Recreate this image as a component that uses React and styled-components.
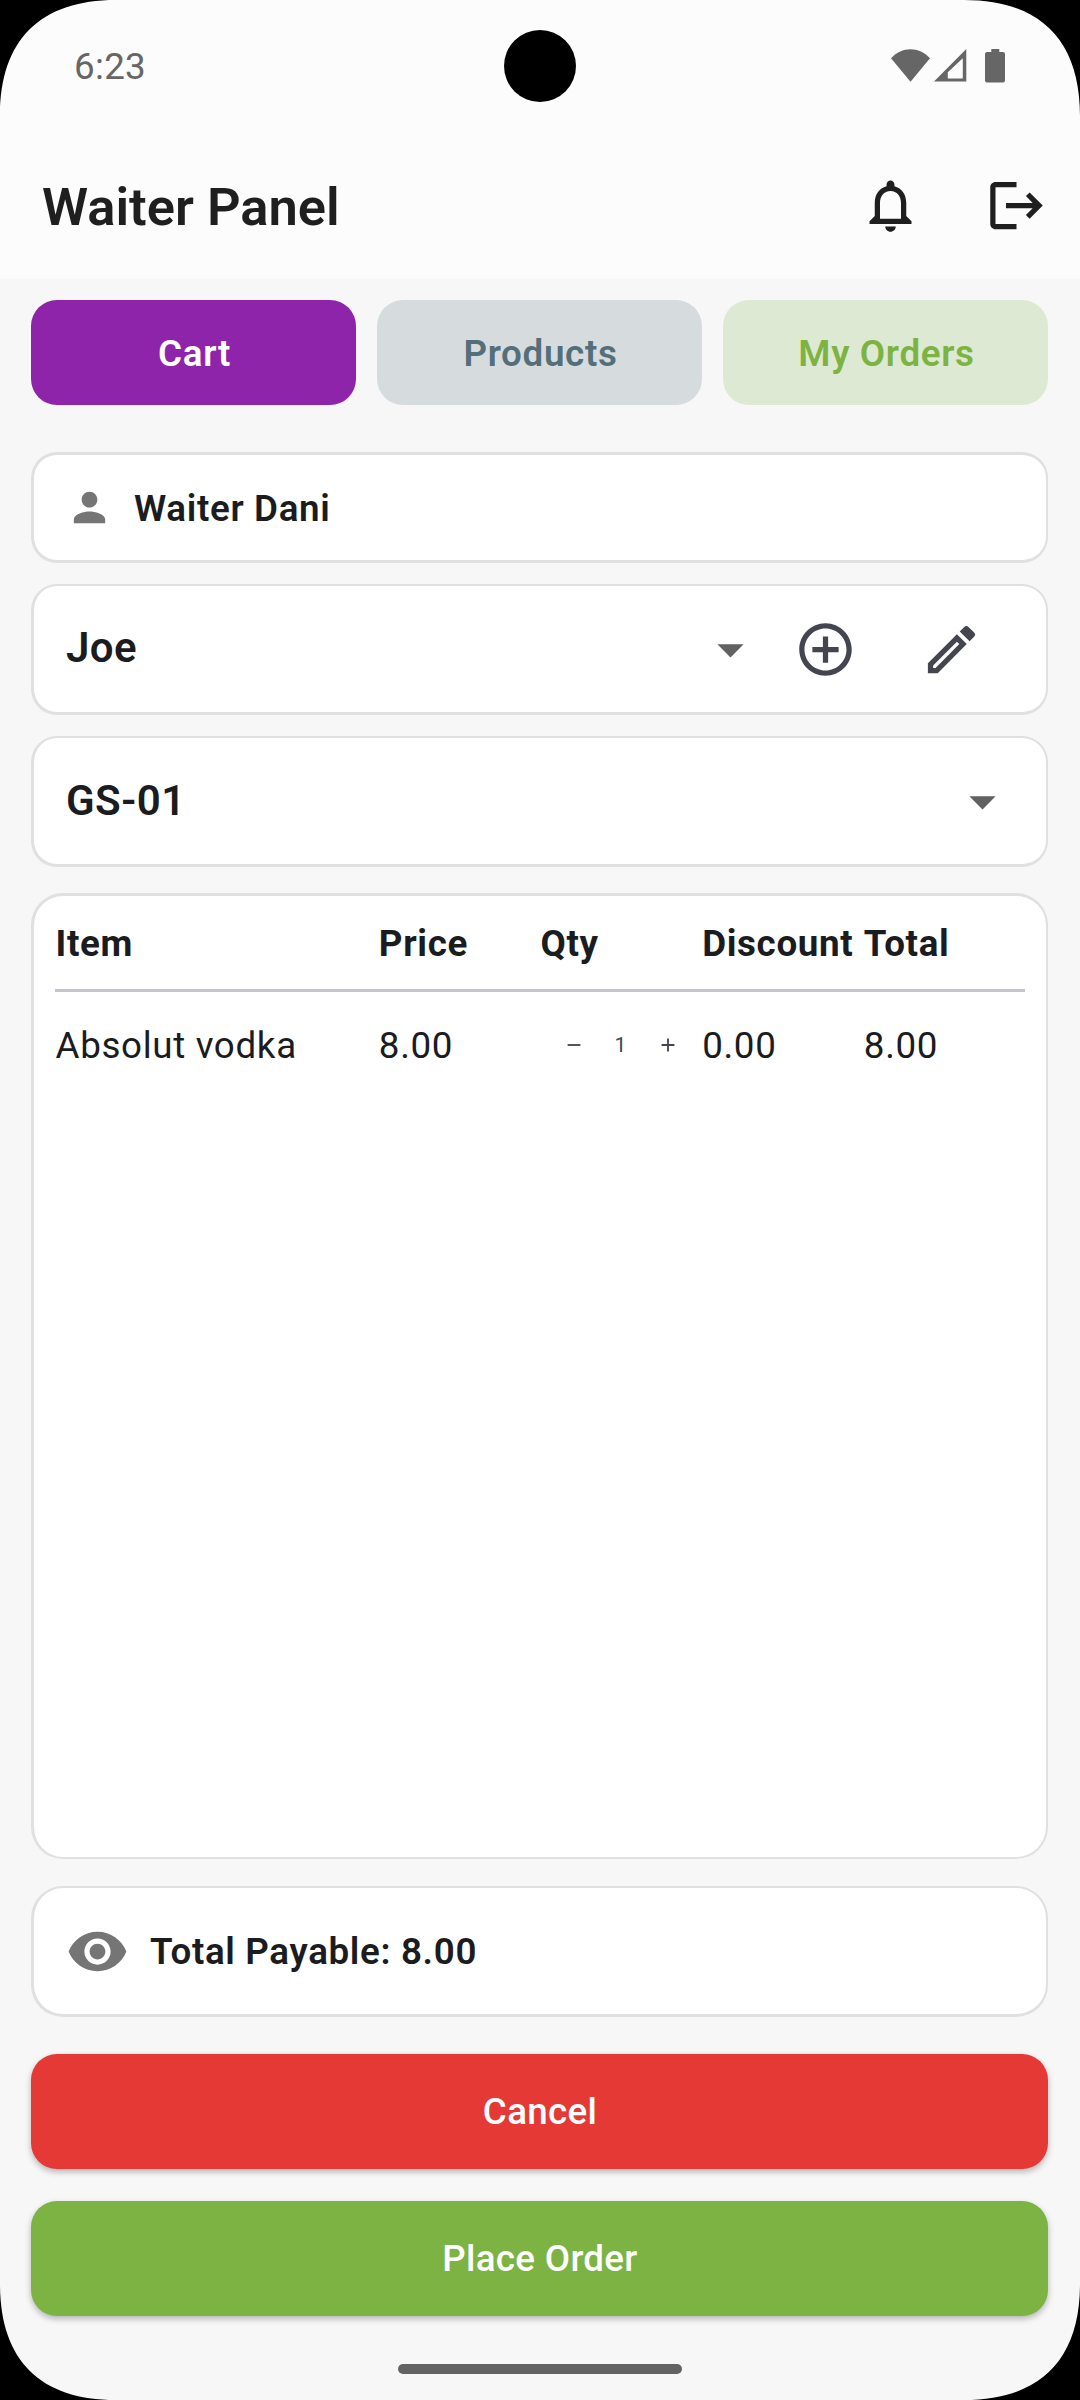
import React from "react";
import styled, { createGlobalStyle } from "styled-components";
import {
  MdNotificationsNone,
  MdLogout,
  MdPerson,
  MdArrowDropDown,
  MdAddCircleOutline,
  MdOutlineEdit,
  MdVisibility,
  MdAdd,
  MdRemove,
} from "react-icons/md";

const GlobalStyle = createGlobalStyle`
  * {
    box-sizing: border-box;
  }

  body {
    margin: 0;
    background: #000;
    font-family: Roboto, sans-serif;
  }

  svg {
    display: block;
    flex-shrink: 0;
  }
`;

const Screen = styled.div`
  position: relative;
  display: flex;
  flex-direction: column;
  width: 1080px;
  height: 2400px;
  background: #f7f7f7;
  overflow: hidden;
`;

// black display corners, drawn over everything
const Corner = styled.svg`
  position: absolute;
  width: 116px;
  height: 116px;
  ${({ $bottom }) => ($bottom ? "bottom: 0;" : "top: 0;")}
  ${({ $right }) => ($right ? "right: 0;" : "left: 0;")}
  transform: scale(
    ${({ $right }) => ($right ? -1 : 1)},
    ${({ $bottom }) => ($bottom ? -1 : 1)}
  );
`;

const Header = styled.header`
  background: #fcfcfc;
  height: 279px;
`;

const StatusBar = styled.div`
  display: grid;
  grid-template-columns: 1fr 72px 1fr;
  align-items: center;
  height: 131px;
  padding: 0 74px;
  color: #666;
`;

const Time = styled.span`
  font-size: 36.75px;
  line-height: 43px;
  letter-spacing: 0.3px;
  padding-top: 2px;
`;

const Camera = styled.div`
  width: 72px;
  height: 72px;
  border-radius: 50%;
  background: #000;
`;

const StatusIcons = styled.div`
  display: flex;
  justify-content: flex-end;
`;

const AppBar = styled.div`
  display: flex;
  align-items: center;
  height: 148px;
  padding: 0 1px 0 42px;
  color: #1f1f1f;
`;

const Title = styled.h1`
  flex: 1;
  margin: 0;
  padding-top: 3px;
  font-size: 52.5px;
  font-weight: 600;
  line-height: 62px;
`;

const IconButton = styled.button`
  display: flex;
  align-items: center;
  justify-content: center;
  width: 126px;
  height: 126px;
  padding: 0;
  border: none;
  background: none;
  color: inherit;
`;

const Main = styled.main`
  display: flex;
  flex-direction: column;
  width: 1017px;
  margin-left: 31px;
`;

const Tabs = styled.nav`
  display: grid;
  grid-template-columns: repeat(3, 1fr);
  gap: 21px;
  margin: 21px 0 47px;
`;

const Tab = styled.button`
  height: 105px;
  padding: 2px 0 0 2px;
  border: none;
  border-radius: 26px;
  background: ${({ $bg }) => $bg};
  color: ${({ $color }) => $color};
  font-family: inherit;
  font-size: 36.75px;
  font-weight: 600;
  letter-spacing: 0.66px;
`;

const Card = styled.section`
  display: flex;
  align-items: center;
  height: ${({ $height }) => $height}px;
  margin-bottom: ${({ $gap }) => $gap}px;
  padding: 0 32px;
  border: solid #e0e0e0;
  border-width: ${({ $top = 2, $bottom = 3 }) => `${$top}px 2px ${$bottom}px 3px`};
  border-radius: ${({ $radius = 26 }) => $radius}px;
  background: #fff;
  color: #44464f;
`;

const Label = styled.span`
  margin-left: 21px;
  padding-top: ${({ $drop = 0 }) => $drop}px;
  color: #1a1c20;
  font-size: 36.75px;
  font-weight: 600;
  letter-spacing: 0.66px;
`;

const SelectValue = styled.span`
  flex: 1;
  color: #1a1c20;
  font-size: 42px;
  font-weight: 600;
  letter-spacing: 0.4px;
  padding-bottom: ${({ $lift = 0 }) => $lift}px;
`;

const TableCard = styled.section`
  height: 966px;
  margin-bottom: 27px;
  padding: 0 21px;
  border: solid #e0e0e0;
  border-width: 3px 2px 2px 3px;
  border-radius: 32px;
  background: #fff;
`;

const TableRow = styled.div`
  display: grid;
  grid-template-columns: 2fr 1fr 1fr 1fr 1fr;
  align-items: center;
  height: ${({ $head }) => ($head ? 96 : 106)}px;
  padding-top: ${({ $head }) => ($head ? 2 : 0)}px;
  border-bottom: ${({ $head }) => ($head ? "3px solid #c4c6cf" : "none")};
  color: #1a1c20;
  font-size: 36.75px;
  font-weight: ${({ $head }) => ($head ? 700 : 400)};
  letter-spacing: 0.66px;
  white-space: nowrap;

  > * {
    min-width: 0;
  }

  > span {
    padding-left: 0.5px;
  }
`;

const Quantity = styled.div`
  display: grid;
  grid-template-columns: repeat(3, 47px);
  justify-content: center;
  align-items: center;
  justify-items: center;
  color: #44464f;
`;

const Count = styled.span`
  font-size: 21px;
`;

const ActionButton = styled.button`
  height: 115px;
  margin-bottom: 32px;
  padding: 0 0 0 1px;
  border: none;
  border-radius: 26px;
  background: ${({ $bg }) => $bg};
  box-shadow: 0 3px 6px rgba(0, 0, 0, 0.27);
  color: #fff;
  font-family: inherit;
  font-size: 36.75px;
  font-weight: 500;
  letter-spacing: 0.3px;
`;

const HomeIndicator = styled.div`
  width: 284px;
  height: 10px;
  margin: 16px auto 0;
  border-radius: 5px;
  background: #636363;
`;

const tabs = [
  { label: "Cart", bg: "#8e24aa", color: "#fff" },
  { label: "Products", bg: "#d6dcde", color: "#546e7a" },
  { label: "My Orders", bg: "#dee9d3", color: "#7cb342" },
];

const items = [{ name: "Absolut vodka", price: 8, qty: 1, discount: 0 }];

const total = items.reduce((sum, i) => sum + i.price * i.qty - i.discount, 0);

function ScreenCorner(props) {
  return (
    <Corner viewBox="0 0 116 116" {...props}>
      <path d="M0 0H116C40 0 0 40 0 116Z" fill="#000" />
    </Corner>
  );
}

function SystemIcons() {
  return (
    <StatusIcons>
      <svg width="115" height="34" viewBox="0 0 115 34" fill="currentColor">
        <path d="M0 9.2C11-2.8 28-2.8 39 9.2L19.5 32.7Z" />
        <path
          fillRule="evenodd"
          d="M43 32.5L75.3 0V32.5ZM56.8 23.2V29.6H71.8V9.2Z"
        />
        <path d="M100.3 0H108.3V3H112Q114 3 114 5V31.6Q114 33.6 112 33.6H96Q94 33.6 94 31.6V5Q94 3 96 3H100.3Z" />
      </svg>
    </StatusIcons>
  );
}

function App() {
  return (
    <Screen>
      <GlobalStyle />
      <Header>
        <StatusBar>
          <Time>6:23</Time>
          <Camera />
          <SystemIcons />
        </StatusBar>
        <AppBar>
          <Title>Waiter Panel</Title>
          <IconButton>
            <MdNotificationsNone size={63} />
          </IconButton>
          <IconButton>
            <MdLogout size={63} />
          </IconButton>
        </AppBar>
      </Header>
      <Main>
        <Tabs>
          {tabs.map((tab) => (
            <Tab key={tab.label} $bg={tab.bg} $color={tab.color}>
              {tab.label}
            </Tab>
          ))}
        </Tabs>
        <Card $height={111} $gap={21} $top={3}>
          <MdPerson size={47} color="#757575" />
          <Label $drop={2}>Waiter Dani</Label>
        </Card>
        <Card $height={131} $gap={21}>
          <SelectValue $lift={4}>Joe</SelectValue>
          <MdArrowDropDown size={63} color="#616161" />
          <IconButton>
            <MdAddCircleOutline size={63} />
          </IconButton>
          <IconButton>
            <MdOutlineEdit size={63} />
          </IconButton>
        </Card>
        <Card $height={131} $gap={26}>
          <SelectValue $lift={2}>GS-01</SelectValue>
          <MdArrowDropDown size={63} color="#616161" />
        </Card>
        <TableCard>
          <TableRow $head>
            <span>Item</span>
            <span>Price</span>
            <span>Qty</span>
            <span>Discount</span>
            <span>Total</span>
          </TableRow>
          {items.map((item) => (
            <TableRow key={item.name}>
              <span>{item.name}</span>
              <span>{item.price.toFixed(2)}</span>
              <Quantity>
                <MdRemove size={22} />
                <Count>{item.qty}</Count>
                <MdAdd size={22} />
              </Quantity>
              <span>{item.discount.toFixed(2)}</span>
              <span>{(item.price * item.qty - item.discount).toFixed(2)}</span>
            </TableRow>
          ))}
        </TableCard>
        <Card $height={131} $gap={37} $radius={32}>
          <MdVisibility size={63} color="#757575" />
          <Label>Total Payable: {total.toFixed(2)}</Label>
        </Card>
        <ActionButton $bg="#e53935">Cancel</ActionButton>
        <ActionButton $bg="#7cb342">Place Order</ActionButton>
      </Main>
      <HomeIndicator />
      <ScreenCorner />
      <ScreenCorner $right />
      <ScreenCorner $bottom />
      <ScreenCorner $right $bottom />
    </Screen>
  );
}

export default App;
